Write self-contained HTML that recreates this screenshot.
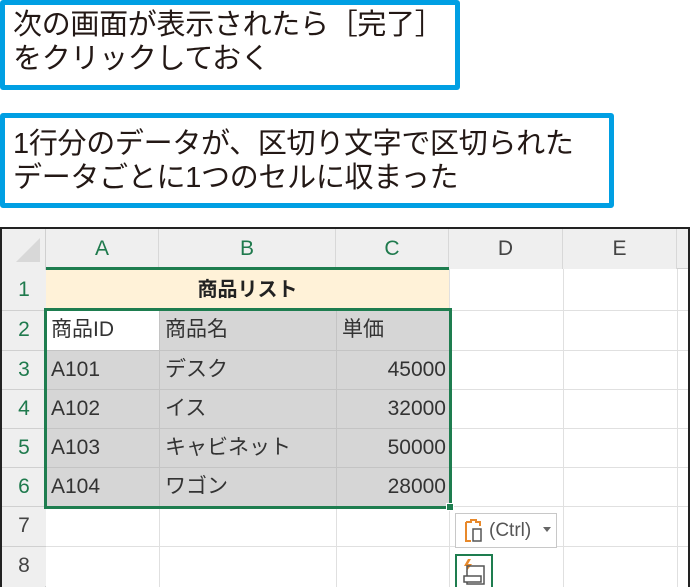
<!DOCTYPE html>
<html><head><meta charset="utf-8"><style>
body{margin:0;width:690px;height:587px;background:#fff;position:relative;overflow:hidden;font-family:"Liberation Sans","Noto Sans CJK JP",sans-serif;}
.box{position:absolute;border:5px solid #009fe3;border-radius:3px;background:#fff;font-size:29px;line-height:34px;color:#231815;padding:3px 0 0 8px;box-sizing:border-box;letter-spacing:-0.3px;white-space:nowrap}
.a{position:absolute;box-sizing:border-box}
.hd{background:#efefef;color:#1f7a4d;text-align:center;font-size:21px}
.c{font-size:21px;color:#333;}
</style></head><body>
<div class="box" style="left:0;top:0;width:460px;height:90px">次の画面が表示されたら［完了］<br>をクリックしておく</div>
<div class="box" style="left:0;top:113px;width:614px;height:95px;padding-top:9px">1行分のデータが、区切り文字で区切られた<br>データごとに1つのセルに収まった</div>

<div class="a" style="left:0;top:227px;width:690px;height:360px;border:2px solid #222;border-bottom:none;background:#fff"></div>
<div class="a" style="left:2px;top:229px;width:686px;height:40px;background:#efefef;border-bottom:1px solid #d0d0d0"></div>
<div class="a" style="left:2px;top:229px;width:44px;height:358px;background:#efefef;border-right:1px solid #d0d0d0"></div>
<svg class="a" style="left:14px;top:236px" width="28" height="28"><polygon points="26,2 26,26 2,26" fill="#d8d8d8"/></svg>
<div class="a hd" style="left:46px;top:229px;width:113px;height:40px;line-height:40px;border-right:1px solid #d8d8d8">A</div>
<div class="a hd" style="left:159px;top:229px;width:177px;height:40px;line-height:40px;border-right:1px solid #d8d8d8">B</div>
<div class="a hd" style="left:336px;top:229px;width:113px;height:40px;line-height:40px;border-right:1px solid #d8d8d8">C</div>
<div class="a hd" style="left:449px;top:229px;width:114px;height:40px;line-height:40px;border-right:1px solid #d8d8d8;color:#444">D</div>
<div class="a hd" style="left:563px;top:229px;width:114px;height:40px;line-height:40px;border-right:1px solid #d8d8d8;color:#444">E</div>
<div class="a" style="left:46px;top:267px;width:403px;height:3px;background:#1e7d4f"></div>
<div class="a hd" style="left:2px;top:270px;width:44px;height:40px;line-height:40px">1</div>
<div class="a hd" style="left:2px;top:310px;width:44px;height:40px;line-height:40px">2</div>
<div class="a hd" style="left:2px;top:350px;width:44px;height:39px;line-height:39px">3</div>
<div class="a hd" style="left:2px;top:389px;width:44px;height:39px;line-height:39px">4</div>
<div class="a hd" style="left:2px;top:428px;width:44px;height:39px;line-height:39px">5</div>
<div class="a hd" style="left:2px;top:467px;width:44px;height:39px;line-height:39px">6</div>
<div class="a hd" style="left:2px;top:506px;width:44px;height:40px;line-height:40px;color:#444">7</div>
<div class="a hd" style="left:2px;top:546px;width:44px;height:40px;line-height:40px;color:#444">8</div>
<svg class="a" style="left:0;top:0" width="690" height="587">
<g stroke="#e0e0e0" stroke-width="1">
<line x1="46" y1="310.5" x2="688" y2="310.5"/><line x1="46" y1="350.5" x2="688" y2="350.5"/><line x1="46" y1="389.5" x2="688" y2="389.5"/><line x1="46" y1="428.5" x2="688" y2="428.5"/><line x1="46" y1="467.5" x2="688" y2="467.5"/><line x1="46" y1="506.5" x2="688" y2="506.5"/><line x1="46" y1="546.5" x2="688" y2="546.5"/>
<line x1="159.5" y1="310" x2="159.5" y2="587"/><line x1="336.5" y1="310" x2="336.5" y2="587"/><line x1="449.5" y1="269" x2="449.5" y2="587"/><line x1="563.5" y1="269" x2="563.5" y2="587"/><line x1="677.5" y1="269" x2="677.5" y2="587"/>
</g>
<g stroke="#d0d0d0"><line x1="2" y1="310.5" x2="46" y2="310.5"/><line x1="2" y1="350.5" x2="46" y2="350.5"/><line x1="2" y1="389.5" x2="46" y2="389.5"/><line x1="2" y1="428.5" x2="46" y2="428.5"/><line x1="2" y1="467.5" x2="46" y2="467.5"/><line x1="2" y1="506.5" x2="46" y2="506.5"/><line x1="2" y1="546.5" x2="46" y2="546.5"/></g>
</svg>
<div class="a" style="left:46px;top:270px;width:403px;height:40px;background:#fff2d8;text-align:center;line-height:40px;font-size:20px;font-weight:bold;color:#222">商品リスト</div>
<div class="a" style="left:159px;top:311px;width:290px;height:39px;background:#d6d6d6"></div>
<div class="a" style="left:46px;top:351px;width:403px;height:156px;background:#d6d6d6"></div>
<svg class="a" style="left:0;top:0" width="690" height="587"><g stroke="#c4c4c4"><line x1="46" y1="389.5" x2="449" y2="389.5"/><line x1="46" y1="428.5" x2="449" y2="428.5"/><line x1="46" y1="467.5" x2="449" y2="467.5"/><line x1="46" y1="350.5" x2="449" y2="350.5"/><line x1="159.5" y1="310" x2="159.5" y2="507"/><line x1="336.5" y1="310" x2="336.5" y2="507"/></g></svg>
<div class="a c" style="left:51px;top:310px;line-height:40px">商品ID</div>
<div class="a c" style="left:165px;top:310px;line-height:40px">商品名</div>
<div class="a c" style="left:342px;top:310px;line-height:40px">単価</div>
<div class="a c" style="left:51px;top:350px;line-height:39px">A101</div>
<div class="a c" style="left:51px;top:389px;line-height:39px">A102</div>
<div class="a c" style="left:51px;top:428px;line-height:39px">A103</div>
<div class="a c" style="left:51px;top:467px;line-height:39px">A104</div>
<div class="a c" style="left:165px;top:350px;line-height:39px">デスク</div>
<div class="a c" style="left:165px;top:389px;line-height:39px">イス</div>
<div class="a c" style="left:165px;top:428px;line-height:39px">キャビネット</div>
<div class="a c" style="left:165px;top:467px;line-height:39px">ワゴン</div>
<div class="a c" style="left:336px;width:110px;text-align:right;top:350px;line-height:39px">45000</div>
<div class="a c" style="left:336px;width:110px;text-align:right;top:389px;line-height:39px">32000</div>
<div class="a c" style="left:336px;width:110px;text-align:right;top:428px;line-height:39px">50000</div>
<div class="a c" style="left:336px;width:110px;text-align:right;top:467px;line-height:39px">28000</div>
<div class="a" style="left:44px;top:308px;width:408px;height:201px;border:3px solid #1e7d4f"></div>
<div class="a" style="left:446px;top:503px;width:8px;height:8px;background:#1e7d4f;border:1px solid #fff"></div>
<div class="a" style="left:455px;top:513px;width:102px;height:35px;border:1px solid #c8c8c8;background:#fff"></div>
<svg class="a" style="left:462px;top:518px" width="26" height="26"><path d="M4 4h5v-2h5v2h4v4" fill="none" stroke="#e8892b" stroke-width="2"/><path d="M4 4v19h5" fill="none" stroke="#e8892b" stroke-width="2"/><rect x="11" y="11" width="8" height="12" fill="#fff" stroke="#555" stroke-width="1.5"/></svg>
<div class="a" style="left:489px;top:516px;font-size:19px;line-height:30px;color:#555">(Ctrl)</div>
<svg class="a" style="left:543px;top:527px" width="8" height="6"><polygon points="0,0 8,0 4,5" fill="#666"/></svg>
<div class="a" style="left:455px;top:554px;width:38px;height:33px;border:2px solid #1e7d4f;border-bottom:none;background:#fff"></div>
<svg class="a" style="left:460px;top:558px" width="28" height="29"><path d="M8 1l-4 7h4l-2 6 6-8h-4l3-5z" fill="#e8892b"/><rect x="7" y="8" width="17" height="18" fill="none" stroke="#555" stroke-width="1.5"/><rect x="4" y="18" width="17" height="6" fill="#fff" stroke="#555" stroke-width="1.5"/></svg>
</body></html>
